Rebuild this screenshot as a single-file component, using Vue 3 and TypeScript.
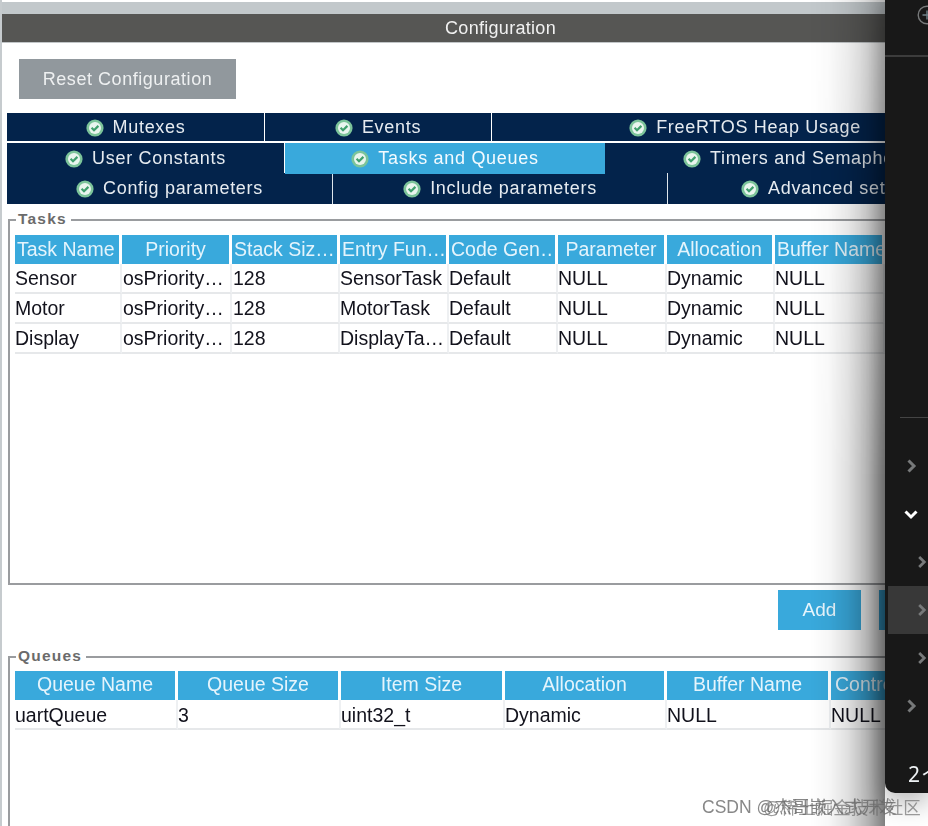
<script setup lang="ts">
interface Tab { label: string; active?: boolean }
const tabRows: { cls: string; tabs: Tab[] }[] = [
  { cls: 'r1', tabs: [{ label: 'Mutexes' }, { label: 'Events' }, { label: 'FreeRTOS Heap Usage' }] },
  { cls: 'r2', tabs: [{ label: 'User Constants' }, { label: 'Tasks and Queues', active: true }, { label: 'Timers and Semaphores' }] },
  { cls: 'r3', tabs: [{ label: 'Config parameters' }, { label: 'Include parameters' }, { label: 'Advanced settings' }] },
]
const taskHead = ['Task Name', 'Priority', 'Stack Siz…', 'Entry Fun…', 'Code Gen…', 'Parameter', 'Allocation', 'Buffer Name']
const taskLeft = ['Stack Siz…', 'Entry Fun…', 'Code Gen…', 'Buffer Name', 'Task Name']
const taskRows = [
  ['Sensor', 'osPriority…', '128', 'SensorTask', 'Default', 'NULL', 'Dynamic', 'NULL'],
  ['Motor', 'osPriority…', '128', 'MotorTask', 'Default', 'NULL', 'Dynamic', 'NULL'],
  ['Display', 'osPriority…', '128', 'DisplayTa…', 'Default', 'NULL', 'Dynamic', 'NULL'],
]
const queueHead = ['Queue Name', 'Queue Size', 'Item Size', 'Allocation', 'Buffer Name', 'Control Block']
const queueRows = [['uartQueue', '3', 'uint32_t', 'Dynamic', 'NULL', 'NULL']]
const chevrons = [
  { cls: 'outer', dir: 'right', dim: true },
  { cls: 'outer', dir: 'down', dim: false },
  { cls: 'inner', dir: 'right', dim: true },
  { cls: 'inner hover', dir: 'right', dim: true },
  { cls: 'inner', dir: 'right', dim: true },
  { cls: 'outer', dir: 'right', dim: true },
]
</script>

<template>
  <div class="page">
    <main class="main">
      <div class="topbar"></div>
      <div class="title">Configuration</div>
      <div class="content">
        <button class="reset">Reset Configuration</button>
        <div class="tabs">
          <div v-for="row in tabRows" :key="row.cls" class="tabrow" :class="row.cls">
            <div v-for="t in row.tabs" :key="t.label" class="tab" :class="{ active: t.active }">
              <svg class="ok" viewBox="0 0 18 18" width="18" height="18">
                <circle cx="9" cy="9" r="8.6" fill="#7cc49a" />
                <circle cx="9" cy="9" r="6" fill="#e9f5ee" />
                <path d="M5.6 8.8 8 11.2 12.4 6.9" fill="none" stroke="#3f9f6c" stroke-width="2.2" />
              </svg>
              <span>{{ t.label }}</span>
            </div>
          </div>
        </div>

        <section class="group tasks">
          <h3 class="legend">Tasks</h3>
          <div class="grid head taskgrid">
            <div v-for="h in taskHead" :key="h" class="hcell" :class="{ start: taskLeft.includes(h) }">{{ h }}</div>
          </div>
          <div v-for="(r, i) in taskRows" :key="i" class="grid taskgrid datarow">
            <div v-for="(c, j) in r" :key="j" class="cell">{{ c }}</div>
          </div>
        </section>

        <div class="actions">
          <button class="btn add">Add</button>
          <button class="btn del"></button>
        </div>

        <section class="group queues">
          <h3 class="legend">Queues</h3>
          <div class="grid head queuegrid">
            <div v-for="h in queueHead" :key="h" class="hcell" :class="{ start: h === 'Control Block' }">{{ h }}</div>
          </div>
          <div v-for="(r, i) in queueRows" :key="i" class="grid queuegrid datarow">
            <div v-for="(c, j) in r" :key="j" class="cell">{{ c }}</div>
          </div>
        </section>
      </div>
    </main>

    <aside class="side">
      <div class="shade"></div>
      <div class="side-top">
        <svg class="plus" viewBox="0 0 20 20" width="20" height="20">
          <circle cx="10" cy="10" r="8.8" fill="none" stroke="#77797a" stroke-width="1.4" />
          <path d="M10 5.5v9M5.5 10h9" stroke="#6f8088" stroke-width="1.4" />
        </svg>
      </div>
      <div class="side-space"></div>
      <div class="side-list">
        <div v-for="(c, i) in chevrons" :key="i" class="chev-row" :class="c.cls">
          <svg viewBox="0 0 14 14" width="14" height="14" :class="{ dim: c.dim }">
            <path v-if="c.dir === 'right'" d="M4.5 1.5 10 7l-5.5 5.5" />
            <path v-else d="M1.5 4.5 7 10l5.5-5.5" />
          </svg>
        </div>
      </div>
      <div class="side-foot"><span>2</span><span class="caret">个</span></div>
    </aside>

    <div class="wm wm-a">CSDN @杰哥嵌入式开发</div>
    <div class="wm wm-b">@稀土掘金技术社区</div>
  </div>
</template>

<style>
html, body { margin: 0; background: #fff; }
</style>

<style scoped>
.page {
  display: flex;
  width: 928px;
  height: 826px;
  overflow: hidden;
  position: relative;
  background: #fff;
  font-family: "Liberation Sans", Arial, sans-serif;
}
.main {
  width: 885px;
  flex: none;
  height: 826px;
  overflow: hidden;
  padding-top: 2px;
  box-sizing: border-box;
  border-left: 2px solid #c6cbce;
  filter: blur(0.35px);
}
.topbar { height: 12px; background: #c2c8cb; margin-left: -2px; }
.title {
  height: 28px;
  background: #565654;
  border-bottom: 1px solid #c2c6c8;
  color: #f1f1f1;
  font: 18px/28px "Liberation Sans", Arial, sans-serif;
  letter-spacing: 0.3px;
  text-align: center;
  padding-left: 114px;
}
.content { padding: 16px 0 0 5px; width: 1000px; }
.reset {
  display: block;
  margin-left: 12px;
  width: 217px;
  height: 40px;
  border: 0;
  padding: 0;
  background: #91989d;
  color: #eef0f1;
  font: 18px "Liberation Sans", Arial, sans-serif;
  letter-spacing: 0.55px;
}
.tabs { margin-top: 14px; width: 993px; }
.tabrow { display: grid; }
.r1 { grid-template-columns: 257px 226px 506px; gap: 1px; height: 28px; margin-bottom: 2px; }
.r2 { grid-template-columns: 278px 320px 394px; height: 29px; margin-bottom: 1px; }
.r3 { grid-template-columns: 325px 335px 333px; height: 31px; }
.tab {
  background: #03234b;
  color: #e6ebf0;
  display: flex;
  align-items: center;
  justify-content: center;
  gap: 9px;
  font: 18px "Liberation Sans", Arial, sans-serif;
  letter-spacing: 0.7px;
  white-space: nowrap;
  box-sizing: border-box;
}
.r1 .tab { padding-top: 1px; }
.r2 .tab:first-child { margin-right: 1px; }
.r3 .tab + .tab { border-left: 1px solid #dfe6ec; }
.tab.active {
  background: #39a9dc;
  color: #f4fbff;
  height: 31px;
  position: relative;
  z-index: 1;
}
.ok { flex: none; }

.group {
  position: relative;
  margin-left: 1px;
  border: 0 solid #9a9c9f;
  border-width: 2px 0 0 2px;
  width: 1000px;
  box-sizing: border-box;
}
.tasks { margin-top: 15px; height: 366px; border-bottom: 2px solid #9a9c9f; padding-top: 14px; }
.queues { margin-top: 26px; height: 200px; padding-top: 13px; }
.legend {
  position: absolute;
  top: -12px;
  left: 6px;
  margin: 0;
  padding: 0 4px 0 2px;
  background: #fff;
  color: #6b6b6b;
  font: bold 15.5px/19px "Liberation Sans", Arial, sans-serif;
  letter-spacing: 1.2px;
}
.grid { display: grid; margin-left: 5px; }
.taskgrid { grid-template-columns: 107px 110px 108px 109px 109px 109px 108px 110px; }
.queuegrid { grid-template-columns: 163px 163px 164px 162px 164px 160px; }
.head { height: 29px; }
.hcell {
  background: #39a9dc;
  color: #e4f4fc;
  font: 19.5px/29px "Liberation Sans", Arial, sans-serif;
  text-align: center;
  margin-right: 3px;
  white-space: nowrap;
  overflow: hidden;
}
.hcell.start { text-align: left; padding-left: 2px; }
.queuegrid .hcell { line-height: 27px; }
.queuegrid .hcell.start { padding-left: 4px; }
.datarow { height: 30px; }
.cell {
  color: #12121c;
  font: 19.5px/29px "Liberation Sans", Arial, sans-serif;
  border-right: 2px solid #eef0f2;
  border-bottom: 2px solid #e6e8ea;
  box-sizing: border-box;
  white-space: nowrap;
  overflow: hidden;
}
.taskgrid > .cell:nth-child(2),
.taskgrid > .cell:nth-child(3) { padding-left: 1px; }
.queuegrid > .cell { line-height: 30px; }

.actions { display: flex; gap: 18px; margin: 5px 0 0 771px; height: 40px; }
.btn {
  height: 40px;
  border: 0;
  padding: 0;
  background: #39a9dc;
  color: #e8f6fd;
  font: 19px "Liberation Sans", Arial, sans-serif;
  flex: none;
}
.add { width: 83px; }
.del { width: 83px; }

.side {
  flex: none;
  width: 43px;
  height: 793px;
  background: #181818;
  border-bottom-left-radius: 10px;
  position: relative;
  z-index: 2;
  box-shadow: 0 8px 26px 2px rgba(0, 0, 0, 0.28);
  display: flex;
  flex-direction: column;
}
/* soft shadow the dark panel casts over the window: weak at the top, heavier lower down */
.shade {
  position: absolute;
  top: 0;
  right: 100%;
  width: 75px;
  height: 826px;
  background: linear-gradient(to right,
    rgba(0, 0, 0, 0) 0%,
    rgba(0, 0, 0, 0.03) 25%,
    rgba(0, 0, 0, 0.12) 50%,
    rgba(0, 0, 0, 0.3) 78%,
    rgba(0, 0, 0, 0.5) 100%);
  -webkit-mask-image: linear-gradient(to bottom, rgba(0, 0, 0, 0.55) 0, #000 480px, #000 100%);
  mask-image: linear-gradient(to bottom, rgba(0, 0, 0, 0.55) 0, #000 480px, #000 100%);
  pointer-events: none;
}
.side-top { height: 57px; border-bottom: 2px solid #3c3c3c; box-sizing: border-box; padding: 5px 0 0 32px; overflow: hidden; }
.plus { display: block; }
.side-space { height: 361px; border-bottom: 1px solid #444; margin-left: 15px; box-sizing: border-box; }
.side-list { padding-top: 24px; overflow: hidden; }
.chev-row { height: 48px; display: flex; align-items: center; }
.chev-row.outer { padding-left: 19px; }
.chev-row.inner { padding-left: 30px; }
.chev-row.hover { background: #383838; margin-left: 3px; padding-left: 27px; }
.chev-row svg path { fill: none; stroke: #fff; stroke-width: 3; }
.chev-row svg.dim path { stroke: #77797a; }
.side-foot {
  margin-top: auto;
  height: 36px;
  padding-left: 23px;
  color: #eef2f4;
  font: 21px/34px "Noto Sans", sans-serif;
  white-space: nowrap;
  display: flex;
  gap: 2px;
  overflow: hidden;
}
.caret { font-family: "Noto Sans CJK SC", sans-serif; }

.wm {
  position: absolute;
  z-index: 3;
  white-space: nowrap;
  font-family: "Liberation Sans", "Noto Sans CJK SC", sans-serif;
  font-size: 17.5px;
  line-height: 20px;
  color: rgba(105, 105, 105, 0.8);
}
.wm-a { left: 702px; top: 797px; }
.wm-b { left: 763px; top: 798px; color: rgba(105, 105, 105, 0.65); }
</style>
